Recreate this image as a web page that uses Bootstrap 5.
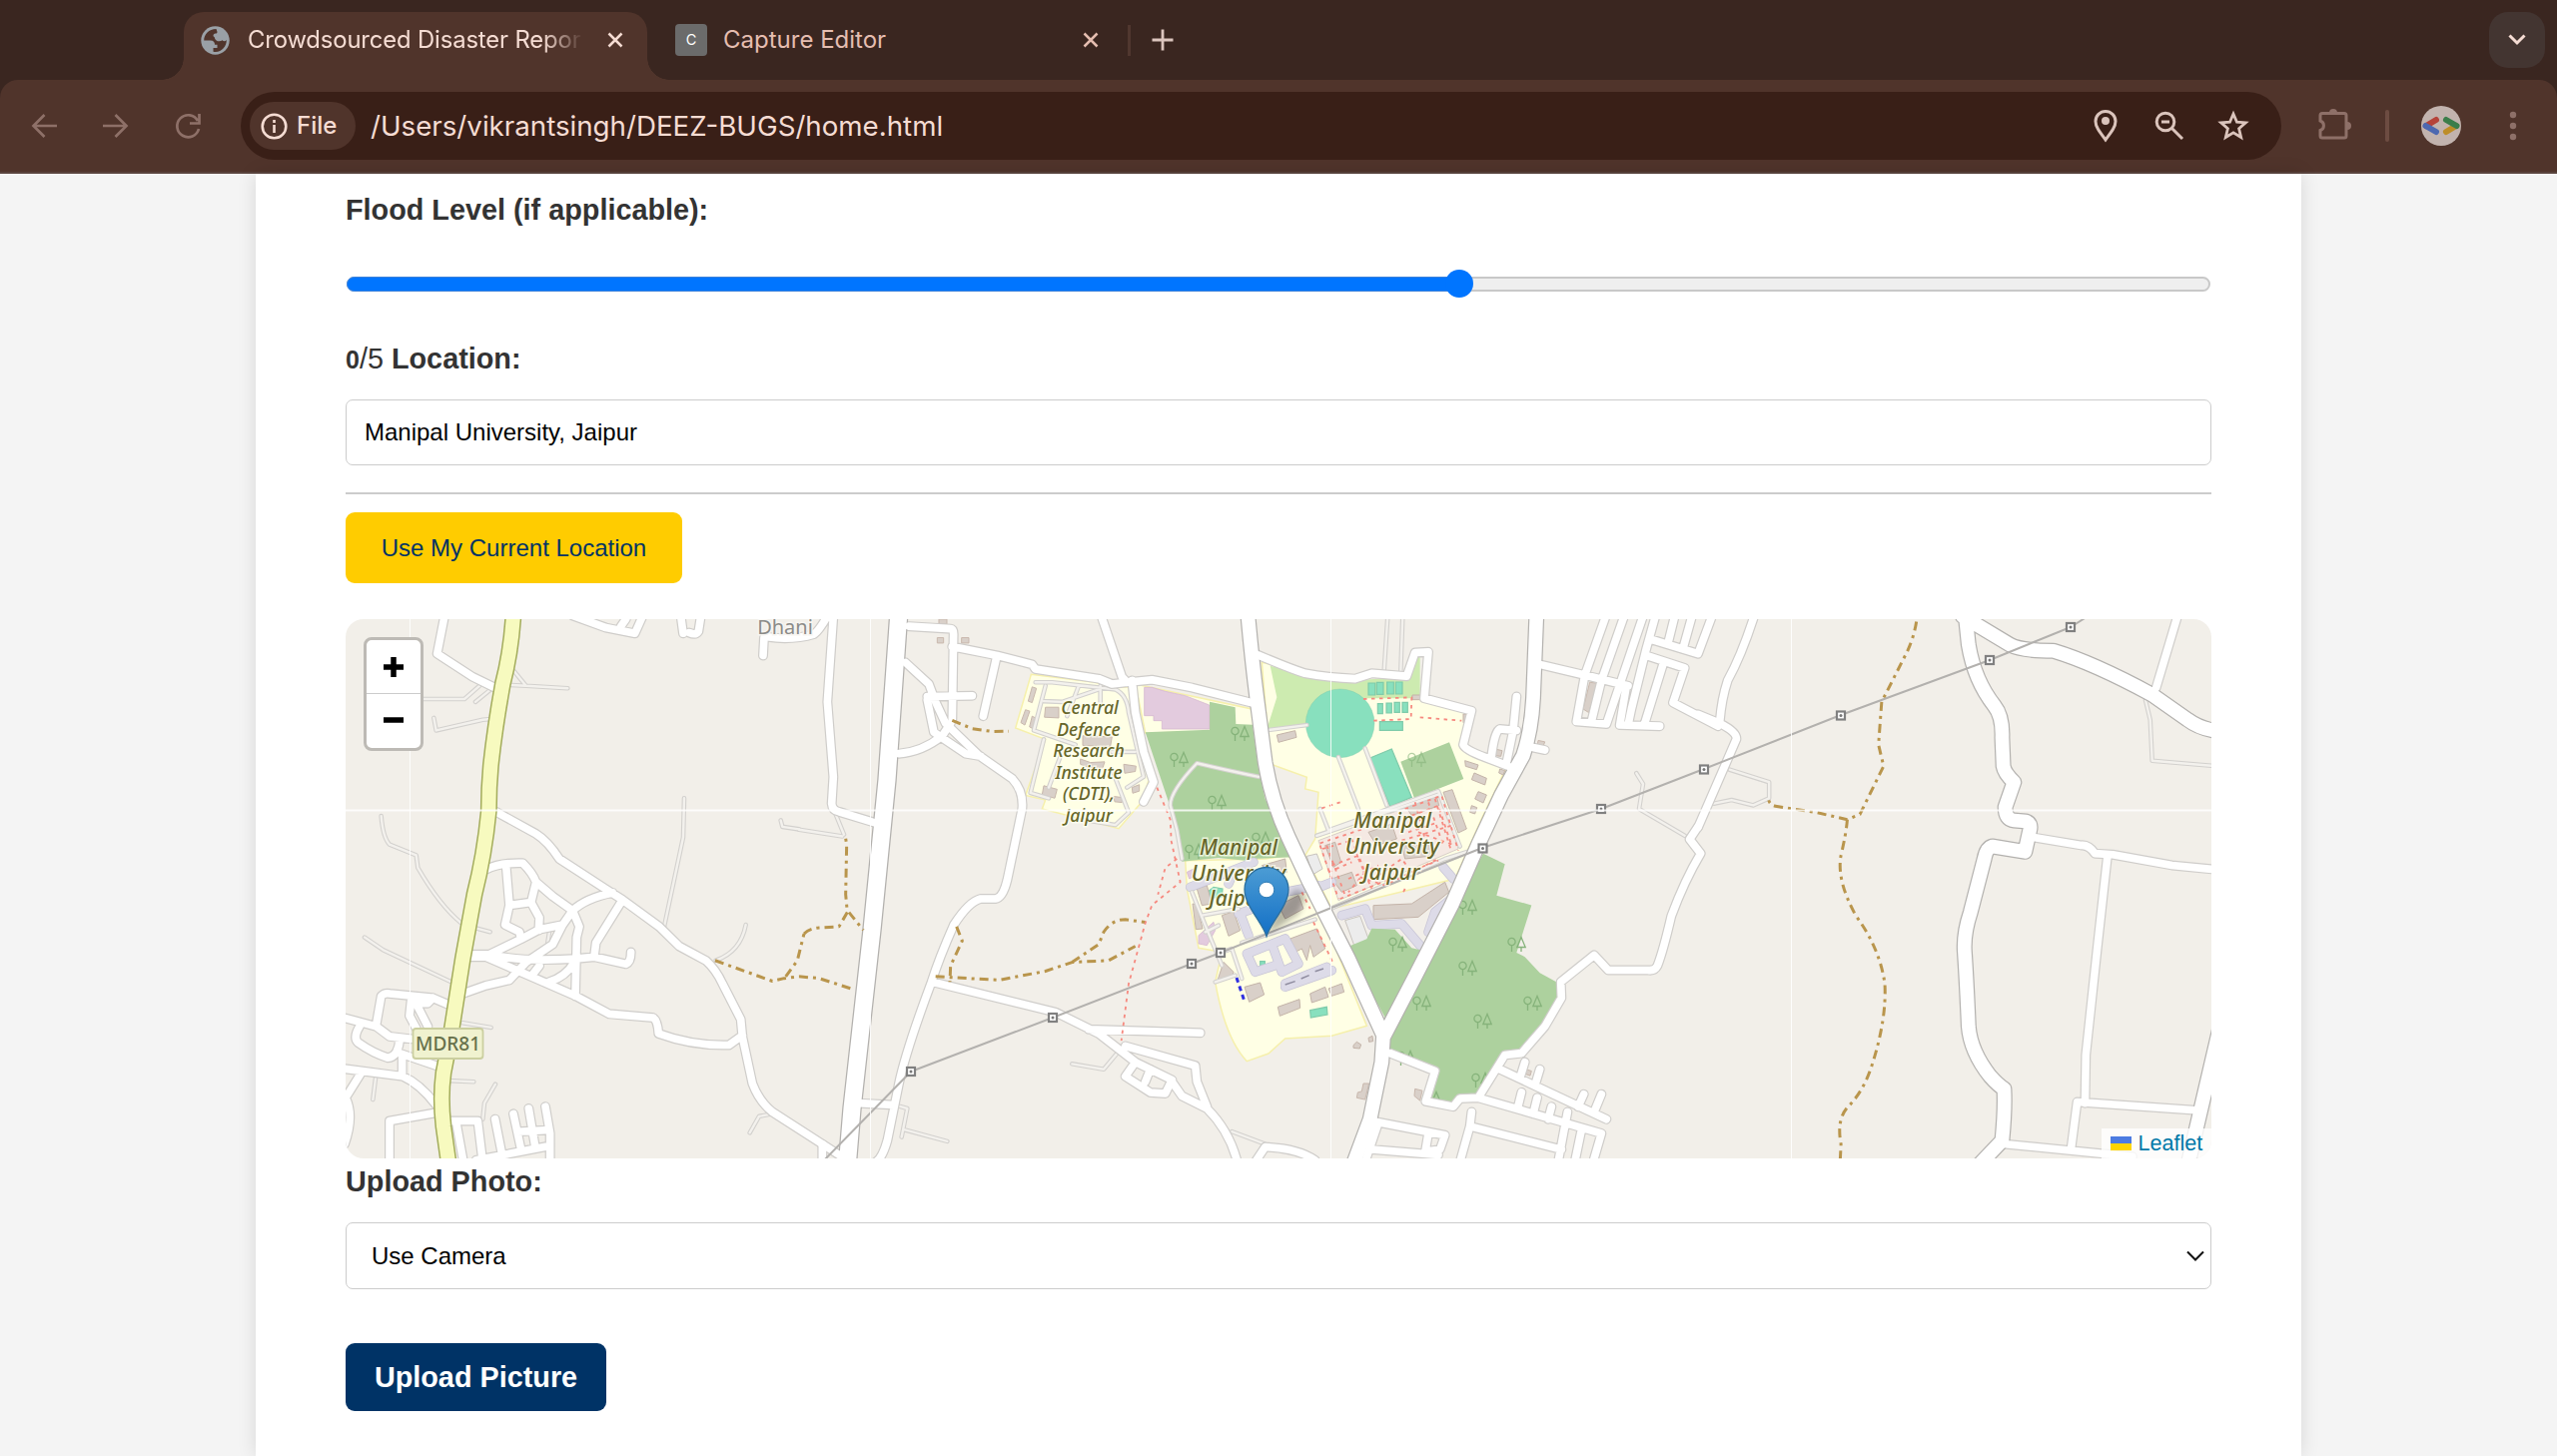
<!DOCTYPE html>
<html lang="en">
<head>
<meta charset="utf-8">
<title>Crowdsourced Disaster Reporting</title>
<link href="https://cdn.jsdelivr.net/npm/bootstrap@5.3.0/dist/css/bootstrap.min.css" rel="stylesheet">
<script src="https://cdn.jsdelivr.net/npm/bootstrap@5.3.0/dist/js/bootstrap.bundle.min.js"></script>
<style>
html,body{height:1458px;overflow:hidden}
body{background:#f4f4f4;font-family:"Liberation Sans",Arial,sans-serif;color:#333}
svg{display:block;flex:none}
.chrome-ui{font-family:Inter,sans-serif;color:#f5dcd3}
.tab-strip{height:80px;background:#3a2620;padding:12px 12px 0 184px}
.tab-on{width:464px;height:68px;background:#50342b;border-radius:20px 20px 0 0;padding:0 24px 12px 17px;position:relative}
.tab-on::before,.tab-on::after{content:"";position:absolute;bottom:0;width:22px;height:22px}
.tab-on::before{left:-22px;background:radial-gradient(circle at 0 0,transparent 21.5px,#50342b 22px)}
.tab-on::after{right:-22px;background:radial-gradient(circle at 100% 0,transparent 21.5px,#50342b 22px)}
.tab-title{font-size:24px;line-height:56px;letter-spacing:0;white-space:nowrap}
.fade-title{width:340px;font-size:23.8px;letter-spacing:-.12px;margin-left:18px;-webkit-mask-image:linear-gradient(90deg,#000 295px,transparent 336px);mask-image:linear-gradient(90deg,#000 295px,transparent 336px)}
.tab-off{width:480px;height:56px;padding-left:28px;color:#e5bdb0}
.fav{width:32px;height:32px;border-radius:4px;background:#6b6b6b;color:#fff;font-size:14.500px;line-height:32px}
.tab-search{width:56px;height:56px;border-radius:19px;background:#433531}
.tool-wrap{background:#3a2620}
.tool-bar{height:94px;background:#50342b;border-bottom:2px solid #5a443e;border-radius:18px 18px 0 0;padding:0 37px 0 28px}
.omni{width:2043px;height:68px;margin-left:38px;border-radius:34px;background:#391f17;padding:0 30px 0 9px}
.chip{width:106px;height:48px;border-radius:24px;background:#50342b;font-size:24px;font-weight:500;padding-left:11px}
.url{font-size:27.7px;line-height:40px;margin-left:15px}
.sheet{width:2048px;height:1284px;background:#fff;box-shadow:0 0 18px rgba(0,0,0,.12);padding:16px 90px 0}
.lbl{font-size:28.8px;line-height:40px;font-weight:700;white-space:pre}
.lbl small{font-size:25px;font-weight:700}
.lbl span{font-weight:400}
.flood{height:28px;margin-top:40px}
.flood .rail{height:15px;margin:0 1px;border:2px solid #c8c8c8;border-radius:8px;background:#efefef}
.flood .done{height:15px;margin:-2px 0 0 -2px;background:#0075ff;border:1px solid #3f82d8;border-radius:8px 0 0 8px;position:relative}
.flood .done::after{content:"";position:absolute;right:-14px;top:-8px;width:28px;height:28px;border-radius:50%;background:#0075ff}
.field{border:1.5px solid #ccc;border-radius:7px;color:#000;font-size:24px;background:#fff}
.rule{height:2px;background:#ccc;margin-top:27px}
.b-loc{width:337px;height:71px;margin-top:18px;background:#fc0;color:#036;border:0;border-radius:9px;font-size:24px;line-height:71px;padding:0}
.b-up{width:261px;height:68px;margin-top:54px;background:#036;color:#fff;border:0;border-radius:9px;font-size:28.8px;font-weight:700;line-height:68px;padding:0}
.map-box{height:540px;margin-top:36px;border-radius:18px;overflow:hidden}
.zoomer{left:18px;top:18px;width:60px;height:114px;border:3.6px solid #bdbab5;border-radius:8px;background:#fff;background-clip:padding-box}
.zoomer>div{height:53px}
.zoomer>div+div{border-top:1.5px solid #ccc}
.attrib{right:0;bottom:0;width:110px;height:30px;background:rgba(255,255,255,.8);color:#0078a8;font-size:21.6px;line-height:30px;padding-left:9px}
.map-box path,.map-box ellipse,.map-box polygon{vector-effect:non-scaling-stroke}
.ln{fill:none;stroke-linecap:round;stroke-linejoin:round}
.map-name{font-family:"Noto Sans",sans-serif;font-style:italic;font-weight:500;fill:#66662a;stroke:#fffff0;stroke-opacity:.75;stroke-width:3px;paint-order:stroke;text-anchor:middle}
</style>
</head>
<body>
<header class="chrome-ui">
  <div class="tab-strip d-flex">
    <div class="tab-on d-flex align-items-center">
      <svg width="29" height="29" viewBox="0 0 29 29"><circle cx="14.500" cy="14.500" r="14.200" fill="#9aa0a6"/><path d="M15.500 3C8 3 3.200 8.500 3.200 14.500h6.500c3 0 4.300 1.800 4.300 4.300h2.500v3.200h-4v3.700C20 27.200 26 21 25.800 14c-1.300 1.600-3 1.600-4.200.3-1.500 1.200-4.300 1.500-6 .2-1.800-1.200-1.300-2.300-2-3.500-1.500-.4-1.500-2.500.2-3.300 1.300-.3 2.700-.2 2.700-1.800z" fill="#50342b"/></svg>
      <div class="tab-title fade-title">Crowdsourced Disaster Repor</div>
      <svg class="ms-auto" width="16" height="16" viewBox="0 0 16 16"><path d="M1.500 1.500l13 13M14.500 1.500l-13 13" stroke="#f5dcd3" stroke-width="2.500"/></svg>
    </div>
    <div class="tab-off d-flex align-items-center">
      <div class="fav text-center">C</div>
      <div class="tab-title ms-3">Capture Editor</div>
      <svg class="ms-auto" style="margin-right:28px" width="16" height="16" viewBox="0 0 16 16"><path d="M1.500 1.500l13 13M14.500 1.500l-13 13" stroke="#e5bdb0" stroke-width="2.500"/></svg>
    </div>
    <svg width="60" height="56" viewBox="0 0 60 56"><path d="M2.500 13v31" stroke="#50372f" stroke-width="3"/><path d="M36 17.500v21M25.500 28h21" stroke="#dcc5be" stroke-width="2.800"/></svg>
    <div class="tab-search ms-auto d-flex align-items-center justify-content-center">
      <svg width="18" height="12" viewBox="0 0 18 12"><path d="M1.500 1.500L9 9l7.500-7.500" fill="none" stroke="#f5dcd3" stroke-width="3"/></svg>
    </div>
  </div>
  <div class="tool-wrap"><div class="tool-bar d-flex align-items-center">
    <svg width="175" height="32" viewBox="28 110 175 32" fill="none" stroke="#8e7068" stroke-width="2.700"><path d="M57 126H34M44.500 115L33.500 126l11 11M103 126h23M115.500 115l11 11-11 11"/><path d="M198 121a11 11 0 1 0 1 8M199.500 114v9.500H190"/></svg>
    <div class="omni d-flex align-items-center">
      <div class="chip d-flex align-items-center"><svg width="27" height="27" viewBox="0 0 27 27"><circle cx="13.500" cy="13.500" r="11.800" fill="none" stroke="#f5dcd3" stroke-width="2.600"/><path d="M13.500 12v8M13.500 7v3" stroke="#f5dcd3" stroke-width="2.600"/></svg><span style="margin-left:9px">File</span></div>
      <div class="url">/Users/vikrantsingh/DEEZ-BUGS/home.html</div>
      <svg class="ms-auto" width="160" height="36" viewBox="2094 108 160 36" fill="none" stroke="#dbc4bc" stroke-width="3"><path d="M2108 140c-6-8-10-13-10-18.500a10 10 0 0 1 20 0c0 5.500-4 10.500-10 18.500z"/><circle cx="2108" cy="121" r="4" fill="#dbc4bc" stroke="none"/><circle cx="2168" cy="122" r="8.800"/><path d="M2164 122h8M2174.500 128.500l10.500 10.500"/><path stroke-width="2.800" d="M2236 114l3.500 8.200 8.800.7-6.700 5.800 2.100 8.800-7.700-4.600-7.700 4.600 2.100-8.800-6.700-5.800 8.800-.7z"/></svg>
    </div>
    <svg style="margin-left:34px" width="205" height="44" viewBox="2318 104 205 44"><path d="M2325 113.500h22a2 2 0 0 1 2 2v20.500a2 2 0 0 1-2 2h-22a2 2 0 0 1-2-2v-5.500a5 5 0 0 0 0-9.500v-5.500a2 2 0 0 1 2-2z" fill="none" stroke="#8e7068" stroke-width="3"/><path d="M2332 113a4 4 0 0 1 8 0zM2350 122a4 4 0 0 1 0 8z" fill="#8e7068"/><rect x="2388" y="110" width="4" height="32" rx="2" fill="#6d4c42"/><circle cx="2444" cy="126" r="20" fill="#c2b3ae"/><g stroke-width="6" stroke-linecap="round"><path d="M2429 126l10-6" stroke="#b5433a"/><path d="M2428.500 126l10.500 6" stroke="#4d68b0"/><path d="M2449 132l10-6" stroke="#bd8d28"/><path d="M2449 120l10.500 6" stroke="#3b7d4a"/></g><g fill="#8e7068"><circle cx="2516" cy="115" r="3.200"/><circle cx="2516" cy="126" r="3.200"/><circle cx="2516" cy="137" r="3.200"/></g></svg>
  </div></div>
</header>
<main class="sheet mx-auto">
  <div class="lbl">Flood Level (if applicable):</div>
  <div class="flood d-flex align-items-center"><div class="rail flex-grow-1"><div class="done" style="width:1114.500px"></div></div></div>
  <div class="lbl" style="margin-top:41px"><small>0</small><span>/5 </span>Location:</div>
  <div class="field d-flex align-items-center" style="height:66px;margin-top:20px;padding-left:18px">Manipal University, Jaipur</div>
  <div class="rule"></div>
  <button class="btn b-loc d-block">Use My Current Location</button>
  <div class="map-box position-relative">
  <svg width="1868" height="540" viewBox="346 620 1868 540">
  <defs>
    <g id="res">
      <g transform="translate(340 610) scale(.33333 .35714)"><path d="M315,20L293,125L400,190L470,222M700,18L800,52L887,68L910,20M860,28L845,48M1025,20L1032,68M1085,20L1078,62Q1070,74 1050,66M1272,130L1275,80M470,568L590,630Q625,650 660,700L800,785L850,815L960,890L1020,945L1100,985Q1130,1010 1150,1050L1205,1150L1210,1200L1240,1330Q1260,1380 1300,1410L1500,1530M440,730Q480,710 550,712Q580,740 590,765L640,805L700,845L720,890L712,920L708,1085M500,720L510,830L497,885L540,905L545,925M510,830L575,822L590,765M575,822L600,865L598,900M700,845Q740,810 820,795M850,815L770,935L765,972M390,968L450,968L545,925L600,898L670,885L700,845M450,968Q550,990 710,980L765,975L860,995Q875,990 875,962M390,975L440,975L600,1040L710,1085L810,1135L940,1145Q955,1150 958,1190Q1060,1225 1170,1222L1210,1195M370,1078L440,1055L510,1040L560,990L640,940L670,885M630,1045Q680,1030 705,990M575,1030L600,1000M10,1145L110,1170L150,1198L215,1205M110,1165L125,1085Q135,1075 150,1078L280,1090L330,1110M215,1095L210,1140L230,1175M215,1105L265,1105L280,1090M235,1115L265,1170M60,1170Q40,1200 55,1215Q100,1245 145,1258Q175,1255 180,1210M180,1245L290,1280M188,1250L188,1310M10,1288L190,1310Q240,1330 290,1390M65,1300L18,1370Q45,1420 15,1500M290,1412L150,1435L150,1550M330,1435L415,1435L430,1550M350,1437L372,1550M410,1545L630,1505M467,1430L487,1525M522,1415L545,1515M568,1400L588,1510M618,1395L632,1470L632,1550M535,1465L630,1460"/></g>
      <g transform="translate(800 610) scale(.33333 .35714)"><path d="M-95,78Q-20,88 45,70Q60,60 85,20M103,20L85,260L103,470L98,545Q100,565 120,568L225,598M330,48L455,55Q464,56 464,70L460,310M385,245L520,243M460,105L595,130L700,155L710,168L900,195L940,210L985,205L1060,198L1180,220L1375,266M593,135L553,300M320,150L390,210L410,260L440,320L540,410L640,475Q675,510 670,560L625,760Q612,810 590,812L545,812Q510,820 465,885Q420,980 398,1045Q320,1240 300,1330L265,1490Q250,1540 230,1550M385,255L405,345L432,362L500,405L545,412M300,405Q370,400 430,355L455,320M908,20L970,190L985,205M1000,200L1010,290L1035,400L1065,485L1035,540M400,1045L770,1130L900,1190L1010,1270L980,1310L1055,1355L1100,1358L1120,1320L1010,1270M1040,1325L1055,1290M1120,1325L1150,1365L1225,1400Q1290,1460 1315,1545M870,1178L1205,1188M980,1225L1190,1280L1195,1325L1225,1395M180,1385L285,1390M70,1500L70,1550M1550,1545Q1500,1512 1400,1508L1370,1550"/></g>
      <g transform="translate(1240 610) scale(.33333 .35714)"><path d="M50,125Q150,165 200,180Q270,192 350,195L400,180L505,188L530,122L570,120L558,250L700,285L675,380Q680,395 740,415L810,440M835,245L825,340L805,430M835,340L785,336Q770,340 760,410M870,385L920,395M905,155L1040,185L1170,215M1103,20L1040,185L1015,315L1105,322L1215,20M1158,20L1090,200L1060,315M1165,215L1145,325L1265,328M1252,20L1225,110L1180,280L1170,325M1275,155L1220,320M1225,130L1340,165L1305,262L1440,328M1240,85L1380,125L1422,20M1310,20L1290,95M1362,20L1335,110M1380,610L1355,645L1388,685Q1340,760 1300,860Q1275,960 1258,1000Q1250,1015 1230,1012L1110,1012L1068,970L968,1045L970,1090L920,1170L850,1245L800,1250L720,1370M455,1245L590,1295L562,1380L645,1395L665,1372L720,1370L980,1440L1090,1470L1065,1550M785,1290L1105,1430M860,1270L845,1315M905,1290L892,1330M850,1355L838,1400M897,1370L885,1415M940,1395L930,1430M988,1410L960,1550M1037,1360L1020,1395M1090,1360L1068,1410M1030,1460L1010,1550M700,1410L695,1450L665,1550M695,1450L970,1515M400,1435L620,1475L605,1515L570,1520M420,1440L380,1550M400,1515L600,1530M570,1470L560,1525"/></g>
      <g transform="translate(1700 610) scale(.3954 .35714)"><path d="M142,20Q110,130 75,200Q60,250 55,315M0,295L55,320Q100,345 97,365L0,612M1214,20L1160,220M850,640L970,662Q990,660 1005,685L1050,688L1200,718L1310,730M1037,690L1010,960L982,1250L980,1385M1260,1405L960,1382L945,1510M780,1500L1100,1535"/></g>
    </g>
    <g id="srv">
      <g transform="translate(340 610) scale(.33333 .35714)"><path d="M245,252L375,252L420,215M408,260L450,228M525,175L560,215L685,222M515,213L560,215M283,305L290,340L430,310L455,308M125,580Q130,640 150,660L230,690L235,725Q300,830 365,880M400,892L452,905M75,920L130,955L335,1045M1035,530L1032,640L975,890M1325,592L1330,610L1380,617M1220,885Q1205,960 1130,985M370,1160L455,1173M330,1322L403,1325M468,1332L435,1385L430,1430M108,1315L100,1375M1300,1415L1260,1422L1232,1468M630,905L625,935"/></g>
      <g transform="translate(800 610) scale(.33333 .35714)"><path d="M110,575L135,632M0,618L130,637M960,1240L915,1290L820,1275M295,1392L325,1400L308,1480M318,1460L445,1492M1300,1465L1400,1500M1150,700L1135,620L1115,550Q1115,510 1195,432Q1300,455 1380,470M710,205L760,205L950,225Q985,240 990,290L1035,470L985,500M740,215L705,340L830,380M735,365L695,515L750,530M790,400L750,500M735,258L790,260L900,225M840,215L805,300M905,215L905,265M940,400L1010,400M940,450L990,570L950,605L850,590"/></g>
      <g transform="translate(1240 610) scale(.33333 .35714)"><path d="M448,20L437,175M493,20L487,175M80,340L205,325M300,415L360,560M380,390L445,550M1195,460L1215,490L1203,560L1340,635M245,560L270,620L600,510L665,665M235,635L600,520M280,838L620,700L740,665M10,935L230,870"/></g>
      <g transform="translate(1700 610) scale(.3954 .35714)"><path d="M80,450L180,485L180,530L140,550L85,535L40,545M1133,255L1145,310L1150,425L1310,440"/></g>
      <g transform="translate(1120 660) scale(.33333)"><path d="M220,700L260,800L310,920M250,770L360,750M310,880L340,870L370,960M290,970L350,950M260,820L300,800"/></g>
    </g>
    <g id="ter">
      <g transform="translate(1240 610) scale(.33333 .35714)"><path d="M28,15Q40,140 55,250L80,430Q100,540 150,640L210,760L330,980L435,1195L430,1270L395,1430L345,1555M895,15L885,250Q880,340 855,410L790,520L720,660L640,830L530,1030L435,1200"/></g>
      <g transform="translate(1700 610) scale(.3954 .35714)"><path d="M677,15L685,100Q700,200 750,270Q772,300 770,360L773,440Q776,460 800,485L778,555Q778,590 800,592L830,595Q845,600 840,620L828,680L745,665Q730,670 725,700L690,850Q672,910 675,960Q680,1040 685,1170Q690,1240 740,1310Q760,1335 775,1345Q778,1400 770,1490L710,1560M670,20L790,100Q820,117 900,117Q1000,150 1150,240L1240,310Q1270,335 1315,342M1320,1180L1240,1560"/></g>
    </g>
    <g id="trees" fill="none" stroke="#86b37b" stroke-width="1.300"><circle cx="-4.500" cy="-2" r="3.600"/><path d="M-4.500 1.500V8M5 -6.500L.8 3.500H9.200ZM5 3.500V8"/></g>
    <g id="pylon"><rect x="-4" y="-4" width="8" height="8" fill="#fff" stroke="#808080" stroke-width="2.200"/><circle r="1.500" fill="#777"/></g>
    <linearGradient id="pin" x1="0" y1="0" x2="0" y2="1"><stop offset="0" stop-color="#4c9cd4"/><stop offset="1" stop-color="#126fc6"/></linearGradient>
    <filter id="soft"><feGaussianBlur stdDeviation="3"/></filter>
  </defs>
  <rect x="346" y="620" width="1868" height="540" fill="#f2efe9"/>
  <!-- land use -->
  <g transform="translate(800 610) scale(.33333 .35714)">
    <path fill="#ffffe5" stroke="#f6f0ac" stroke-width="1.500" d="M697,183L890,205L940,220L990,218L1005,320L1050,480L1030,540L960,615L730,560L740,535L680,522L740,365L650,333Z"/>
    <g fill="#d9d0c9" stroke="#c9b8ad" stroke-width="1"><path d="M700,218L713,222L700,262L688,258ZM680,282L693,286L678,325L666,318ZM700,300L710,305L702,335L692,330ZM740,275L780,275L780,305L737,303ZM852,355L940,358L935,385L852,382ZM845,420L875,430L918,428L912,445L870,444L845,435ZM735,495L775,505L768,530L730,520ZM975,435L1012,440L1010,455L978,460ZM1000,500L1022,492L1022,510L1002,516ZM945,525L970,528L970,542L948,540ZM415,80L434,80L434,95L415,95ZM488,80L510,80L510,95L488,95ZM420,28L444,28L444,42L420,42Z"/></g>
  </g>
  <g transform="translate(1120 660) scale(.33333)">
    <path fill="#ffffe5" stroke="#f6f0ac" stroke-width="1.500" d="M50,75L400,150L410,215L80,222ZM200,605L440,600L510,590L600,740L745,1102L640,1132L500,1140L450,1185L385,1208Q320,1140 290,970L310,880L240,868L205,690ZM430,10L905,115L1060,160L1035,270L1165,325L1090,480L1010,660L640,750L560,590L590,540L600,400L560,390L565,355L455,315Z"/>
    <path fill="#cdebb0" d="M455,20L560,45L700,65L870,52L905,-20L905,118L740,118L560,205L445,210L475,115Z"/>
    <path fill="#add19e" d="M80,220L273,212L273,128L350,145L352,195L402,197L420,330L440,420L525,595L400,600L380,605L300,597L190,608L170,500L150,430ZM847,308L993,250L1036,360L888,418Z"/>
    <path fill="#e3cbde" stroke="#d5b8d0" stroke-width=".8" d="M77,85L100,85L140,97L200,110L272,138L272,210L130,210L130,185L105,185L105,170L77,170ZM205,640L225,630L232,650L212,660ZM240,830L285,790L290,815L265,860L240,855Z"/>
    <g fill="#88e0be" stroke="#7fcbaa" stroke-width="1.200"><circle cx="665" cy="193" r="103"/><path d="M755,297L820,270L880,415L815,443Z"/><path d="M750,72h20v36h-20zM775,70h20v36h-20zM806,69h20v36h-20zM832,69h20v36h-20zM778,134h15v30h-15zM804,132h16v30h-16zM828,130h16v30h-16zM852,130h16v30h-16zM784,188h69v26h-69zM575,1055L625,1045L627,1068L577,1077ZM260,705L285,685L312,690L310,715L270,718ZM425,908h14v14h-14z"/></g>
    <path fill="#f5e9e3" stroke="#d8cfc8" stroke-width="1" d="M600,545L970,405L1020,570L660,725Z"/>
    <g fill="#d9d0c9" stroke="#c4b4a9" stroke-width="1"><path d="M475,228L530,215L534,235L480,250ZM750,520L820,495L835,540L775,560ZM860,440L955,410L962,440L880,470ZM620,560L650,550L668,610L645,625ZM850,560L940,560L950,590L860,600ZM975,400L1002,392L1045,510L1020,522ZM1040,305L1080,318L1075,332L1042,322ZM1068,342L1105,358L1100,378L1060,362ZM1080,398L1105,408L1095,432L1070,420ZM1060,440L1076,446L1070,465L1055,460ZM640,660L700,640L715,680L670,700ZM765,740L880,735L980,670L992,700L900,775L765,782ZM1035,165h10v26h-10zM1130,270L1152,275L1148,292L1130,290ZM1145,330L1160,335L1155,348L1142,342ZM882,108h30v14h-30zM235,690L265,680L280,735L250,740ZM310,770L345,758L365,815L330,832ZM222,735L235,738L252,810L232,812ZM480,740L540,710L555,750L500,780ZM515,840L595,810L620,870L585,895L575,860L565,905L550,870L530,880ZM315,910L345,940L338,958L298,962ZM378,985L425,972L437,1008L392,1030ZM478,1045L543,1022L545,1048L484,1072ZM575,1005L620,985L630,1015L580,1032ZM630,990L670,975L677,1000L640,1012ZM430,620L500,600L505,640L470,650ZM705,1160L715,1150L728,1158L724,1170L705,1168ZM750,1138L762,1132L764,1148L752,1150Z"/></g>
    <path fill="#ececec" stroke="#c9c4be" stroke-width="1" d="M680,785L725,772L752,845L708,862ZM565,592L595,585L612,630L582,648Z"/>
    <g fill="none" stroke-linejoin="round" stroke-linecap="round"><g stroke="#c8c5d6" stroke-width="9.500"><path d="M215,685L405,610M330,675L345,640M670,770L740,750L760,800L850,795L905,860M930,820L950,760L1000,720M975,625L1005,660M365,765L390,830M360,765L430,740M385,885L410,940L470,920M385,885L500,840L540,915L490,940L465,870M500,975L625,925M500,985L640,935M590,690L640,670M500,700L600,680"/></g><path stroke="#dddbe8" stroke-width="8" d="M215,685L405,610M330,675L345,640M670,770L740,750L760,800L850,795L905,860M930,820L950,760L1000,720M975,625L1005,660M365,765L390,830M360,765L430,740M385,885L410,940L470,920M385,885L500,840L540,915L490,940L465,870M500,975L625,925M500,985L640,935M590,690L640,670M500,700L600,680"/></g>
    <path d="M500,978L530,968M548,960L572,950M590,938L615,930" stroke="#8f8c9f" stroke-width="1.500"/>
  </g>
  <g transform="translate(1240 610) scale(.33333 .35714)">
    <path fill="#add19e" d="M735,685L800,715L775,803L880,830L835,963L860,975L905,1020L960,1048L970,1090L850,1245L800,1250L720,1360L645,1385L565,1375L590,1290L455,1245L435,1200L640,850ZM325,948L385,925L400,895L470,898L520,950L565,960L440,1145Z"/>
    <g fill="#d9d0c9" stroke="#c9b8ad" stroke-width="1"><path d="M1055,205L1080,208L1052,290L1035,280ZM900,368L920,372L915,385L898,380ZM375,1330L392,1330L380,1375L355,1370L358,1355L370,1352ZM530,1345L552,1350L545,1378L528,1365ZM862,1290L880,1295L876,1308L860,1303Z"/></g>
  </g>
  <g>
    <use href="#trees" x="1180" y="760"/><use href="#trees" x="1241" y="734"/><use href="#trees" x="1218" y="803"/><use href="#trees" x="1262" y="840"/><use href="#trees" x="1195" y="852"/><use href="#trees" x="1418" y="760" opacity=".6"/>
    <use href="#trees" x="1469" y="908"/><use href="#trees" x="1399" y="945"/><use href="#trees" x="1469" y="969"/><use href="#trees" x="1518" y="945"/><use href="#trees" x="1423" y="1004"/><use href="#trees" x="1534" y="1004"/><use href="#trees" x="1484" y="1022"/><use href="#trees" x="1407" y="1059"/><use href="#trees" x="1482" y="1081"/><use href="#trees" x="1433" y="1100"/>
  </g>
  <!-- roads: casing first, then surface -->
  <g class="ln"><use href="#srv" stroke="#d3d1ce" stroke-width="4.600"/><use href="#srv" stroke="#f3f1ed" stroke-width="2.400"/>
  <use href="#res" stroke="#cfcdca" stroke-width="10"/>
  <use href="#ter" stroke="#b3b1ae" stroke-width="16"/>
  <path d="M900,612L888,781L873,931L853,1110L848,1170" stroke="#b3b1ae" stroke-width="19.500"/>
  <use href="#res" stroke="#fff" stroke-width="7.600"/><use href="#ter" stroke="#fff" stroke-width="13.600"/>
  <path d="M900,612L888,781L873,931L853,1110L848,1170" stroke="#fff" stroke-width="17"/></g>
  <g class="ln" transform="translate(340 610) scale(.33333 .35714)"><path d="M522,15Q515,120 490,210Q465,340 454,440Q448,500 448,565Q435,690 405,800L370,980L338,1170Q325,1240 312,1300Q302,1370 312,1450L330,1570" stroke="#a3ac5c" stroke-width="17"/><path d="M522,15Q515,120 490,210Q465,340 454,440Q448,500 448,565Q435,690 405,800L370,980L338,1170Q325,1240 312,1300Q302,1370 312,1450L330,1570" stroke="#f7fabf" stroke-width="14"/></g>
  <!-- tracks -->
  <g class="ln" stroke="#b9954c" stroke-width="3" stroke-dasharray="9 5 3 5" style="stroke-linecap:butt">
    <g transform="translate(340 610) scale(.33333 .35714)"><path d="M1128,985L1300,1043L1335,1035L1380,1030M1340,1030L1375,985L1395,910"/></g>
    <g transform="translate(800 610) scale(.33333 .35714)"><path d="M0,1030L60,1035L160,1065M15,910Q30,895 60,893L120,890L145,850L140,800L143,660L138,632M150,850L193,900M460,312L520,335L580,343L630,342M473,890L490,930L455,1000L453,1045M410,1030L600,1040L740,1015L820,990L930,985L1010,945M820,990L900,940L915,905Q940,870 980,870L1040,878"/></g>
    <g transform="translate(1700 610) scale(.3954 .35714)"><path d="M553,35Q545,90 520,140L465,260L457,380L470,440L410,575L378,590L300,570L200,553Q180,550 178,530M378,590Q375,630 362,690Q350,760 400,860Q460,950 473,1050Q478,1150 440,1280Q420,1350 380,1395Q350,1430 362,1500L360,1545"/></g>
  </g>
  <!-- footways -->
  <g class="ln" stroke="#f68a80" stroke-width="1.800" stroke-dasharray="3.500 4.500" style="stroke-linecap:butt">
    <g transform="translate(800 610) scale(.33333 .35714)"><path d="M1075,500L1115,590L1118,650L1145,765L1060,830L1040,880L990,1050L968,1210M1135,700L1100,725L1078,800"/></g>
    <g transform="translate(1120 660) scale(.33333)"><path d="M735,120L880,115L878,180L765,185M905,175L1030,185M610,448L665,430M585,790L645,915M605,553L735,510M612,570L700,545M605,560L660,720M625,560L680,710M640,620L720,590L740,640M700,540L720,600M740,640L690,700M665,720L960,605M725,655L800,680L960,600M860,450L970,410L1020,575M880,470L960,440L1000,560M930,430L975,560M850,545L1000,500M870,520L960,490M720,600L760,690M780,650L850,600L880,640M900,520L1010,560M690,660L780,620M550,700L575,750M950,420L1000,580M630,640L700,610M890,430L920,540M860,690L850,710"/></g>
  </g>
  <path d="M1238,979l8,24" stroke="#2f2fe0" stroke-width="3" stroke-dasharray="5 4"/>
  <!-- power line -->
  <path class="ln" d="M822,1165L912,1073L1054,1019L1193,965L1222,954L1333,909L1484,849L1603,810L1706,770L1843,716L1992,661L2073,628L2092,616" stroke="#b3b1ae" stroke-width="2"/>
  <use href="#pylon" x="912" y="1073"/><use href="#pylon" x="1054" y="1019"/><use href="#pylon" x="1193" y="965"/><use href="#pylon" x="1222" y="954"/><use href="#pylon" x="1484.500" y="849.500"/><use href="#pylon" x="1603" y="810"/><use href="#pylon" x="1706" y="770.500"/><use href="#pylon" x="1843" y="716.500"/><use href="#pylon" x="1992" y="661"/><use href="#pylon" x="2073" y="628"/>
  <!-- names -->
  <g class="map-name" font-size="17.600"><text x="1091" y="715">Central</text><text x="1090" y="737">Defence</text><text x="1090" y="758">Research</text><text x="1090" y="780">Institute</text><text x="1090" y="801">(CDTI),</text><text x="1090" y="823">Jaipur</text></g>
  <g class="map-name" font-size="21"><text x="1394" y="829">Manipal</text><text x="1394" y="855">University</text><text x="1393" y="881">Jaipur</text><text x="1240" y="856">Manipal</text><text x="1240" y="882">University</text><text x="1239" y="907">Jaipur</text></g>
  <text x="786" y="635" font-family="Noto Sans" font-size="20" text-anchor="middle" fill="#8b8b88" stroke="#f7f5f1" stroke-width="3" paint-order="stroke">Dhani</text>
  <rect x="413.500" y="1030" width="70" height="30" rx="3" fill="#f0f2cf" stroke="#cbcfa0" stroke-width="1.800"/>
  <text x="448.500" y="1052" font-family="Noto Sans" font-size="19" font-weight="500" text-anchor="middle" fill="#66704a">MDR81</text>
  <path d="M410.500,620V1160M871.500,620V1160M1332.500,620V1160M1793.500,620V1160" stroke="#fff" stroke-opacity=".85" stroke-width="1"/><path d="M346,811.500H2214" stroke="#fff" stroke-opacity=".8" stroke-width="2"/>
  <!-- marker -->
  <path d="M1269,937L1276,912L1298,890L1308,897L1300,915Z" fill="#000" opacity=".28" filter="url(#soft)"/>
  <path d="M1268,937.500C1264,924 1246,907 1246,890.500A22,22 0 0 1 1290,890.500C1290,907 1272,924 1268,937.500Z" fill="url(#pin)" stroke="#2b6f9f" stroke-width="1.300"/>
  <circle cx="1268" cy="891" r="7.800" fill="#fff" stroke="#2e7bb5" stroke-width="1"/>
  </svg>
  <div class="zoomer position-absolute">
    <div class="d-flex align-items-center justify-content-center"><svg width="22" height="22" viewBox="0 0 22 22"><path d="M11 1v20M1 11h20" stroke="#000" stroke-width="5.500"/></svg></div>
    <div class="d-flex align-items-center justify-content-center"><svg width="22" height="22" viewBox="0 0 22 22"><path d="M1 11h20" stroke="#000" stroke-width="5.500"/></svg></div>
  </div>
  <div class="attrib position-absolute d-flex align-items-center"><svg width="21" height="14" viewBox="0 0 21 14"><path fill="#4c7be1" d="M0 0h21v7H0z"/><path fill="#ffd500" d="M0 7h21v7H0z"/></svg><span style="margin-left:6.500px">Leaflet</span></div>
  </div>
  <div class="lbl" style="margin-top:3px">Upload Photo:</div>
  <div class="field d-flex align-items-center justify-content-between" style="height:67px;margin-top:21px;padding:0 5px 0 25px">Use Camera<svg width="20" height="12" viewBox="0 0 20 12"><path d="M2 1.500l8 8 8-8" fill="none" stroke="#111" stroke-width="2"/></svg></div>
  <button class="btn b-up d-block">Upload Picture</button>
</main>
</body>
</html>
